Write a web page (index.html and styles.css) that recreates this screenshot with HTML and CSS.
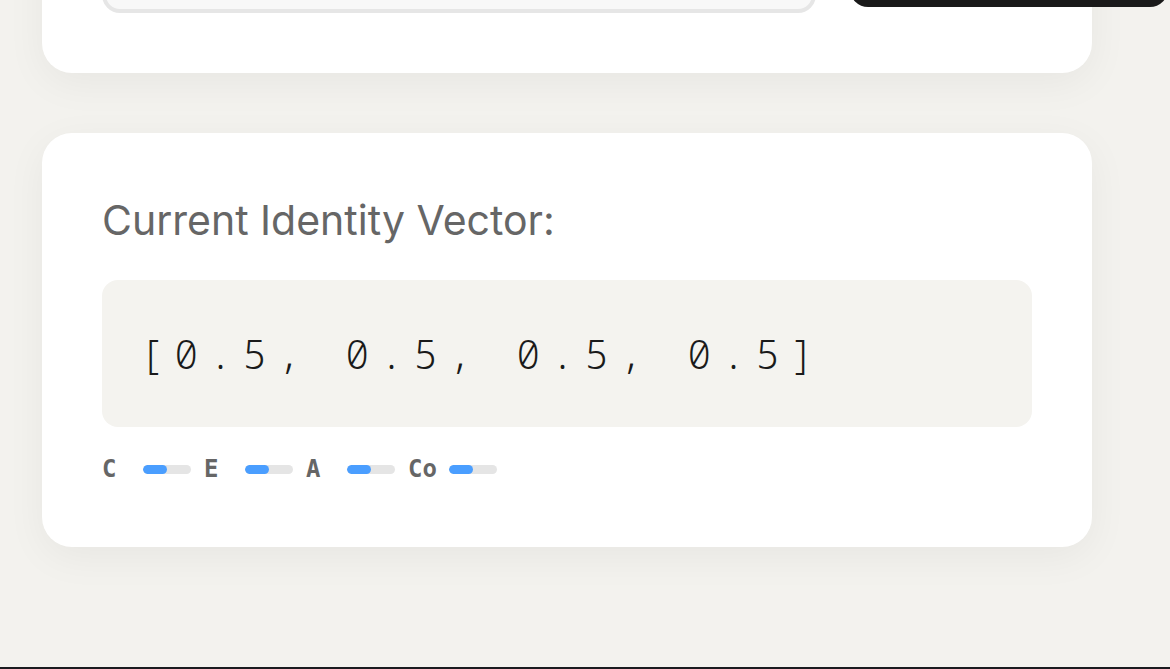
FILE: index.html
```html
<!DOCTYPE html>
<html lang="en">
<head>
<meta charset="utf-8">
<title>Identity Vector</title>
<link rel="stylesheet" href="styles.css">
</head>
<body>
<main class="page">
  <section class="card card-input">
    <div class="input-row">
      <div class="text-input"></div>
      <button class="primary-btn" type="button"></button>
    </div>
  </section>
  <section class="card card-vector">
    <h2 class="vector-label">Current Identity Vector:</h2>
    <div class="vector-box">[0.5, 0.5, 0.5, 0.5]</div>
    <div class="dims">
      <div class="dim"><span class="dim-key">C</span><span class="bar"><span class="bar-fill" style="width:50%"></span></span></div>
      <div class="dim"><span class="dim-key">E</span><span class="bar"><span class="bar-fill" style="width:50%"></span></span></div>
      <div class="dim"><span class="dim-key">A</span><span class="bar"><span class="bar-fill" style="width:50%"></span></span></div>
      <div class="dim"><span class="dim-key">Co</span><span class="bar"><span class="bar-fill" style="width:50%"></span></span></div>
    </div>
  </section>
</main>
<footer class="footer"></footer>
</body>
</html>
```

FILE: styles.css
```css
html, body {
  margin: 0;
  padding: 0;
}
body {
  background: #f3f2ee;
  font-family: "Inter", "Noto Sans", sans-serif;
  overflow: hidden;
}
.page {
  display: flex;
  flex-direction: column;
  gap: 60px;
  padding: 0 0 120px 42px;
  margin-top: -111px;
}
.card {
  width: 1050px;
  box-sizing: border-box;
  background: #ffffff;
  border-radius: 30px;
  padding: 60px;
  box-shadow: 0 10px 40px rgba(0, 0, 0, 0.05);
}
.input-row {
  display: flex;
  align-items: center;
  gap: 34px;
}
.text-input {
  flex: none;
  width: 714px;
  height: 64px;
  box-sizing: border-box;
  background: #f8f8f8;
  border: 4px solid #e6e6e6;
  border-radius: 18px;
}
.primary-btn {
  flex: none;
  width: 318px;
  height: 52px;
  border: 0;
  border-radius: 18px;
  background: #1a1a1a;
}
.card-vector {
  padding-top: 61px;
  padding-bottom: 62px;
}
.vector-label {
  margin: 0;
  font-weight: 400;
  font-size: 41px;
  line-height: 52px;
  color: #666666;
}
.vector-box {
  margin-top: 34px;
  height: 147px;
  box-sizing: border-box;
  display: flex;
  align-items: center;
  padding-left: 38px;
  background: #f4f3ef;
  border-radius: 16px;
  font-family: "Noto Sans Mono", "Liberation Mono", "DejaVu Sans Mono", monospace;
  font-weight: 300;
  font-size: 40px;
  letter-spacing: 10.2px;
  color: #1a1a1a;
  white-space: pre;
}
.dims {
  display: flex;
  align-items: center;
  gap: 13px;
  margin-top: 26px;
}
.dim {
  display: flex;
  align-items: center;
  gap: 10px;
}
.dim-key {
  width: 31px;
  font-family: "DejaVu Sans Mono", monospace;
  font-weight: 700;
  font-size: 24px;
  line-height: 32px;
  color: #666666;
}
.bar {
  display: block;
  width: 48px;
  height: 9px;
  border-radius: 5px;
  background: #e5e5e5;
  overflow: hidden;
}
.bar-fill {
  display: block;
  height: 100%;
  border-radius: 5px;
  background: #4a9eff;
}
.footer {
  height: 2px;
  background: #1a1b1f;
}
```
